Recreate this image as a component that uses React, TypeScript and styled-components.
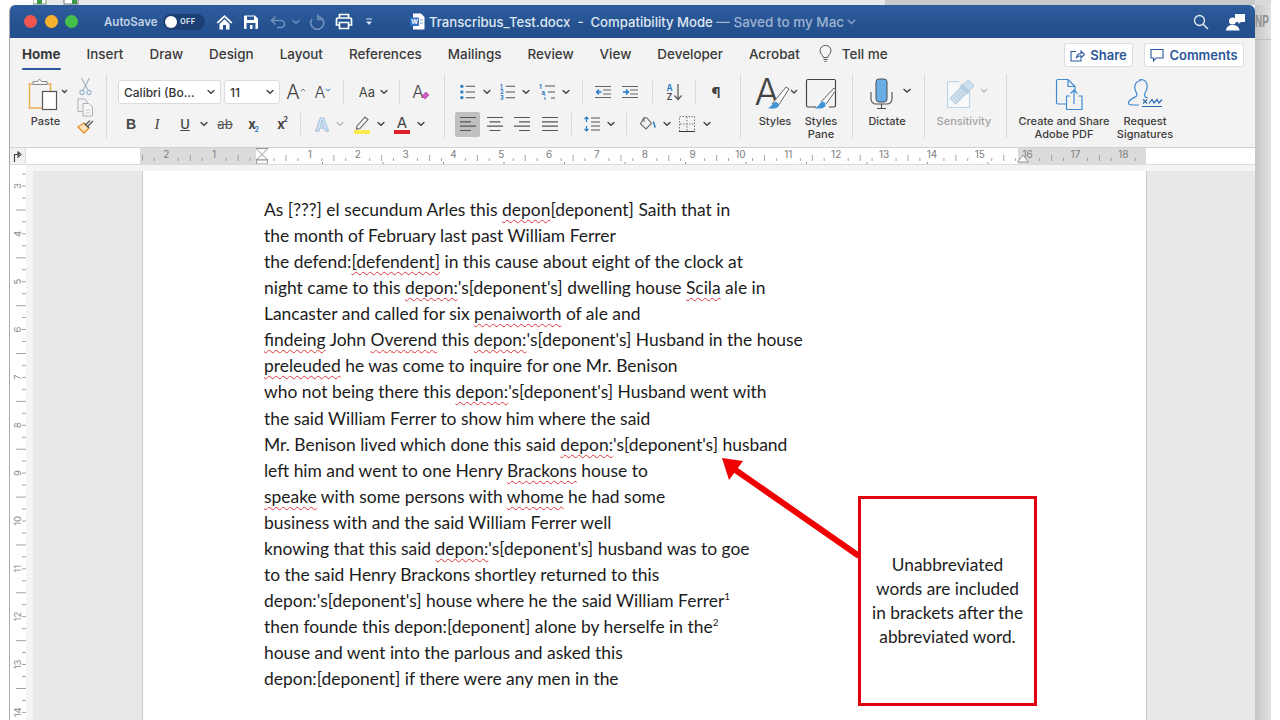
import React from "react";
import styled, { createGlobalStyle } from "styled-components";

const Global = createGlobalStyle`
  html, body { margin: 0; padding: 0; background: #fff; }
  body { font-family: Inter, "Liberation Sans", sans-serif; }
`;

const Screen = styled.div`
  position: relative; width: 1280px; height: 720px; overflow: hidden; background: #fff;
  display: flex; flex-direction: column;
`;
const BackStrip = styled.div`display: flex; height: 5px; flex: none;`;
const BackCell = styled.div<{ $w: number; $bg: string }>`
  width: ${p => p.$w}px; background: ${p => p.$bg}; flex: none; display: flex; gap: 16px; align-items: flex-end;
`;
const Main = styled.div`display: flex; flex: 1; min-height: 0; padding-left: 9px;`;
const Win = styled.div`
  width: 1245px; flex: none; display: flex; flex-direction: column; border-left: 1px solid #a9a9a9;
  border-radius: 6px 6px 0 0; overflow: hidden; background: #f4f3f3;
`;
const SideStrip = styled.div`
  width: 16px; flex: none; background: linear-gradient(90deg, #c6c6c6, #e2e2e2);
  font: 700 16px "Liberation Sans", sans-serif; color: #8f8f8f;
`;
const SideHead = styled.div`
  height: 34px; border-bottom: 1px solid #bdbdbd; display: flex; align-items: center;
`;
const SideText = styled.span`display: block; transform: scaleX(.62); transform-origin: left; white-space: nowrap;`;

/* ---- title bar ---- */
const TitleBar = styled.div`
  height: 33px; flex: none; display: flex; align-items: center; padding-left: 14px; padding-right: 10px;
  background: linear-gradient(180deg, #2f5c9f, #25528f 60%, #234f90);
  color: #fff;
`;
const Light = styled.span<{ $c: string; $l?: number }>`
  width: 13px; height: 13px; border-radius: 50%; background: ${p => p.$c}; flex: none; margin-left: ${p => p.$l ?? 0}px;
`;
const AutoSave = styled.span`
  margin-left: 26px; width: 53px; flex: none; white-space: nowrap; font-size: 11.5px; font-weight: 600; color: #c3d2e6;
`;
const Toggle = styled.span`
  margin-left: 6px; width: 42px; height: 16px; border-radius: 8px; flex: none; background: #1c3f74;
  display: flex; align-items: center; padding-left: 2px; box-sizing: border-box;
`;
const Knob = styled.span`width: 12px; height: 12px; border-radius: 50%; background: #fff; flex: none;`;
const ToggleText = styled.span`margin-left: 3px; font-size: 7.5px; font-weight: 700; color: #d5deeb; letter-spacing: .3px;`;
const Tool = styled.span<{ $l?: number; $w?: number }>`
  margin-left: ${p => p.$l ?? 0}px; width: ${p => p.$w ?? 16}px; flex: none;
  display: flex; align-items: center; justify-content: center; position: relative;
`;
const DocTitle = styled.span`
  margin-left: 4px; flex: none; white-space: nowrap; font-size: 13.15px; font-weight: 500; color: #dfe7f2;
`;
const Dim = styled.span`color: #9db3d2; font-size: 13.5px;`;
const TitleRight = styled.span`margin-left: auto; display: flex; align-items: center;`;

/* ---- tabs ---- */
const TabRow = styled.div`
  height: 34px; flex: none; display: flex; align-items: center; padding: 0 11px 0 12px; gap: 26px;
  font-size: 13.45px; color: #3a3a3a; white-space: nowrap;
`;
const Tab = styled.span<{ $active?: boolean }>`
  position: relative; font-weight: ${p => (p.$active ? 700 : 500)}; flex: none; margin-bottom: 2px;
  ${p => p.$active && `&::after { content: ""; position: absolute; left: 0; right: 0; bottom: -8px; height: 2.5px; background: #2b579a; border-radius: 1px; }`}
`;
const TellMe = styled.span`margin-left: -7px; margin-bottom: 2px; display: flex; align-items: center; gap: 10px; font-weight: 500;`;
const RightBtns = styled.span`margin-left: auto; display: flex; gap: 11px;`;
const OutlineBtn = styled.span<{ $w: number }>`
  width: ${p => p.$w}px; height: 24px; box-sizing: border-box; background: #fff; border: 1px solid #dedddd; border-radius: 3px;
  display: flex; align-items: center; justify-content: center; gap: 5px; color: #2b579a; font-size: 13px; font-weight: 600;
`;

/* ---- ribbon ---- */
const Ribbon = styled.div`
  height: 76px; flex: none; display: flex; align-items: flex-start; border-bottom: 1px solid #d2d1d1; box-sizing: border-box; color: #3a3a3a;
`;
const GroupDiv = styled.span<{ $l?: number }>`
  width: 1px; height: 64px; margin-top: 2px; margin-left: ${p => p.$l ?? 0}px; background: #d9d8d8; flex: none;
`;
const PasteGroup = styled.div`width: 96px; flex: none; display: flex;`;
const SmallCol = styled.div`display: flex; flex-direction: column; margin-left: 8px; padding-top: 5px; gap: 2px; flex: none;`;
const Group = styled.div<{ $w: number }>`
  width: ${p => p.$w}px; flex: none; display: flex; flex-direction: column; gap: 8px; padding-top: 8px; box-sizing: border-box;
`;
const ToolRow = styled.div<{ $pl?: number }>`display: flex; align-items: center; height: 24px; padding-left: ${p => p.$pl ?? 0}px;`;
const SelectBox = styled.span<{ $l?: number; $w: number }>`
  margin-left: ${p => p.$l ?? 0}px; width: ${p => p.$w}px; height: 24px; flex: none; box-sizing: border-box;
  background: #fff; border: 1px solid #dcdbdb; border-radius: 3px; display: flex; align-items: center; justify-content: space-between;
  padding: 0 5px 0 5px; font-size: 12px; font-weight: 500; color: #333; white-space: nowrap;
`;
const MiniDiv = styled.span<{ $l: number }>`width: 1px; height: 22px; background: #dbdada; margin-left: ${p => p.$l}px; flex: none;`;
const Glyph = styled.span<{ $s?: number; $c?: string; $w?: number; $f?: string }>`
  font-size: ${p => p.$s ?? 13}px; color: ${p => p.$c ?? "#444"}; font-weight: ${p => p.$w ?? 500}; line-height: 1;
  font-family: ${p => p.$f ?? "inherit"};
`;
const Strike = styled.span`font-size: 13px; color: #555; text-decoration: line-through; line-height: 1;`;
const Script = styled.span<{ $up?: boolean }>`
  font-size: 7px; font-weight: 700; position: absolute; line-height: 1; right: 1px;
  color: ${p => (p.$up ? "#444" : "#2d7fc8")};
  ${p => (p.$up ? "top: -2px;" : "bottom: -2px;")}
`;
const ActiveBox = styled.span`
  width: 25px; height: 25px; background: #c1c0c0; border-radius: 2px; margin-left: 10px; flex: none;
  display: flex; align-items: center; justify-content: center;
`;
const LargeTool = styled.div<{ $l?: number; $w: number }>`
  margin-left: ${p => p.$l ?? 0}px; width: ${p => p.$w}px; flex: none; display: flex; flex-direction: column; align-items: center;
  padding-top: 6px;
`;
const IconArea = styled.div`height: 37px; display: flex; align-items: flex-start; justify-content: center;`;
const Label = styled.div<{ $dim?: boolean }>`
  font-size: 11px; line-height: 13px; font-weight: 500; text-align: center; white-space: nowrap;
  color: ${p => (p.$dim ? "#a3a3a3" : "#3d3d3d")};
`;
const GlyphSvg = styled.svg`overflow: visible; flex: none;`;
const EraserMark = styled.svg`margin-left: -3px; margin-top: 6px; flex: none;`;

/* ---- ruler ---- */
const RulerRow = styled.div`
  height: 17px; flex: none; display: flex; background: #fff; border-bottom: 1px solid #dcdbdb; box-sizing: border-box;
`;
const RulerCorner = styled.div`
  width: 16px; flex: none; display: flex; align-items: center; justify-content: center; background: #f3f2f2; border-right: 1px solid #dcdbdb; box-sizing: border-box;
`;

/* ---- document ---- */
const DocArea = styled.div`flex: 1; min-height: 0; display: flex;`;
const VRuler = styled.div`width: 16px; flex: none; background: #fff; overflow: hidden;`;
const DocCol = styled.div`flex: 1; display: flex; flex-direction: column; background: #f5f4f4; min-width: 0;`;
const DocTop = styled.div`height: 6px; flex: none;`;
const DocRow = styled.div`flex: 1; display: flex; padding-left: 7px; min-height: 0;`;
const Gutter = styled.div<{ $w?: number; $side: "l" | "r" }>`
  ${p => (p.$w ? `width:${p.$w}px;flex:none;` : "flex:1;")}
  background: #e9e8e8; box-sizing: border-box;
  ${p => (p.$side === "l" ? "border-right: 1px solid #c9c8c8;" : "border-left: 1px solid #c9c8c8;")}
`;
const Page = styled.div`
  width: 1003px; flex: none; background: #fff; box-sizing: border-box; padding: 26px 0 0 121px;
  font-family: Lato, "Open Sans", sans-serif; font-size: 17.45px; line-height: 26.06px; color: #1c1c1c; white-space: nowrap; overflow: hidden;
`;
const Line = styled.div``;
const Err = styled.span`
  text-decoration: underline wavy #e0353a; text-decoration-thickness: 1px; text-underline-offset: 2.5px;
`;
const Sup = styled.sup`font-size: 10px; line-height: 0;`;

/* ---- overlays ---- */
const Callout = styled.div`
  position: absolute; left: 858px; top: 496px; width: 179px; height: 210px; box-sizing: border-box;
  border: 3px solid #e0000f; background: #fff; display: flex; align-items: center; justify-content: center;
  text-align: center; font: 400 17.3px/24px Lato, "Open Sans", sans-serif; color: #1c1c1c;
`;
const ArrowSvg = styled.svg`position: absolute; left: 700px; top: 440px;`;

/* ---- icons ---- */
const Chev = ({ c = "#444", w = 9 }: { c?: string; w?: number }) => (
  <svg width={w} height="6" viewBox="0 0 9 6"><path d="M1.2 1.2 4.5 4.5 7.8 1.2" fill="none" stroke={c} strokeWidth="1.6" strokeLinecap="round" /></svg>
);
const Lines = ({ rows, w = 16 }: { rows: [number, number][]; w?: number }) => (
  <svg width={w} height="16" viewBox={`0 0 ${w} 16`}>
    {rows.map(([a, b], i) => <path key={i} d={`M${a} ${1.5 + (i * 13) / (rows.length - 1)}H${b}`} stroke="#555" strokeWidth="1.2" />)}
  </svg>
);
const ListIcon = ({ kind }: { kind: "b" | "n" | "m" }) => (
  <svg width="17" height="16" viewBox="0 0 17 16">
    {[2, 8, 14].map((y, i) => <path key={y} d={`M${kind === "m" ? 6 + i * 3 : 6} ${y}H16`} stroke="#555" strokeWidth="1.1" />)}
    {[2, 8, 14].map((y, i) => kind === "b"
      ? <rect key={i} x="0.5" y={y - 1.5} width="3" height="3" fill="#2478c4" />
      : <text key={i} x={kind === "m" ? i * 2.5 : 0} y={y + 2.5} fontSize="6" fontWeight="700" fill="#2478c4" fontFamily="Inter">{kind === "m" ? ["1", "a", "i"][i] : i + 1}</text>)}
  </svg>
);
const IndentIcon = ({ flip }: { flip?: boolean }) => (
  <svg width="16" height="14" viewBox="0 0 16 14">
    <path d="M0 1.5H16M8 5H16M8 9H16M0 12.5H16" stroke="#666" strokeWidth="1.1" />
    <path d={flip ? "M1 7H6M4 4.5 6.5 7 4 9.5" : "M6.5 7H1.5M4 4.5 1.5 7 4 9.5"} fill="none" stroke="#2478c4" strokeWidth="1.3" />
  </svg>
);

const Ruler = () => {
  const u = 47.85, z = 236;
  const nums: [string, number][] = [];
  for (let k = -2; k <= 18; k++) if (k !== 0) nums.push([String(Math.abs(k)), z + k * u]);
  const ticks: React.ReactNode[] = [];
  for (let k = -3; k <= 19; k++) {
    const x = z + k * u;
    ticks.push(<path key={`a${k}`} d={`M${x + 24} 7V13M${x + 12} 10V13M${x - 12} 10V13`} stroke="#8f8f8f" strokeWidth=".8" />);
  }
  const tabs: number[] = [];
  for (let i = 1; i <= 12; i++) tabs.push(z + i * 60.5);
  return (
    <svg width="1229" height="16" viewBox="0 0 1229 16">
      <rect x="114" y="0" width="116" height="16" fill="#dcdbdb" />
      <rect x="992" y="0" width="128" height="16" fill="#dcdbdb" />
      <clipPath id="rc"><rect x="114" y="0" width="1006" height="16" /></clipPath>
      <g clipPath="url(#rc)">{ticks}</g>
      {nums.map(([t, x]) => <text key={x} x={x} y="10" fontSize="10" fill="#7d7d7d" textAnchor="middle" fontFamily="Inter">{t}</text>)}
      {tabs.map(x => <path key={x} d={`M${x} 14V16`} stroke="#777" strokeWidth=".8" />)}
      <path d="M230 .5H242L236 6.5ZM236 6.5 230 12H242Z" fill="#fafafa" stroke="#8d8d8d" strokeWidth=".9" />
      <rect x="230.5" y="12" width="11" height="4" rx="1" fill="#fafafa" stroke="#8d8d8d" strokeWidth=".9" />
      <path d="M997 7 991.500 14H1002.500Z" fill="#fafafa" stroke="#8d8d8d" strokeWidth=".9" />
    </svg>
  );
};
const VerticalRuler = () => {
  const u = 47.85;
  const items: React.ReactNode[] = [];
  for (let n = 3; n <= 14; n++) {
    const y = 21 + (n - 3) * u;
    items.push(
      <g key={n}>
        <text transform={`translate(10.500 ${y}) rotate(-90)`} fontSize="9.500" fill="#8a8a8a" textAnchor="middle" fontFamily="Inter">{n}</text>
        <path d={`M12 ${y}H16M12 ${y + 12}H16M12 ${y - 12}H16M6 ${y + 24}H16`} stroke="#9a9a9a" strokeWidth=".9" />
      </g>
    );
  }
  return <svg width="16" height="555" viewBox="0 0 16 555">{items}</svg>;
};

const doc: React.ReactNode[] = [
  <>As [???] el secundum Arles this <Err>depon</Err>[deponent] Saith that in</>,
  <>the month of February last past William Ferrer</>,
  <>the defend:<Err>[defendent]</Err> in this cause about eight of the clock at</>,
  <>night came to this <Err>depon:</Err>'s[deponent's] dwelling house <Err>Scila</Err> ale in</>,
  <>Lancaster and called for six <Err>penaiworth</Err> of ale and</>,
  <><Err>findeing</Err> John <Err>Overend</Err> this <Err>depon:</Err>'s[deponent's] Husband in the house</>,
  <><Err>preleuded</Err> he was come to inquire for one Mr. Benison</>,
  <>who not being there this <Err>depon:</Err>'s[deponent's] Husband went with</>,
  <>the said William Ferrer to show him where the said</>,
  <>Mr. Benison lived which done this said <Err>depon:</Err>'s[deponent's] husband</>,
  <>left him and went to one Henry <Err>Brackons</Err> house to</>,
  <><Err>speake</Err> with some persons with <Err>whome</Err> he had some</>,
  <>business with and the said William Ferrer well</>,
  <>knowing that this said <Err>depon:</Err>'s[deponent's] husband was to goe</>,
  <>to the said Henry Brackons shortley returned to this</>,
  <>depon:'s[deponent's] house where he the said William Ferrer<Sup>1</Sup></>,
  <>then founde this depon:[deponent] alone by herselfe in the<Sup>2</Sup></>,
  <>house and went into the parlous and asked this</>,
  <>depon:[deponent] if there were any men in the</>,
];

const tabs = ["Insert", "Draw", "Design", "Layout", "References", "Mailings", "Review", "View", "Developer", "Acrobat"];

export default function App() {
  return (
    <Screen>
      <Global />
      <BackStrip>
        <BackCell $w={33} $bg="#fff" />
        <BackCell $w={852} $bg="#e9e9e9">
          <svg width="46" height="5" viewBox="0 0 46 5"><rect x="0" y="-5" width="13" height="9" fill="#fff" stroke="#7a9a7a" /><rect x="4" y="0" width="5" height="4" fill="#3d9a4a" /><rect x="31" y="-5" width="14" height="9" fill="#fff" stroke="#777" /><rect x="39" y="0" width="5" height="4" fill="#3d9a4a" /></svg>
        </BackCell>
        <BackCell $w={370} $bg="#c9c9c9" />
        <BackCell $w={16} $bg="#d9d9d9" />
      </BackStrip>
      <Main>
        <Win>
          <TitleBar>
            <Light $c="#f0564f" /><Light $c="#f6b22f" $l={7.5} /><Light $c="#44c04a" $l={7.5} />
            <AutoSave>AutoSave</AutoSave>
            <Toggle><Knob /><ToggleText>OFF</ToggleText></Toggle>
            <Tool $l={11} $w={17}><svg width="17" height="16" viewBox="0 0 17 16"><path d="M.5 8.500 8.500 1 16.500 8.500 15 9.500 8.500 3.500 2 9.500ZM3.500 10 8.500 5.300 13.500 10V15.500H10V11H7V15.500H3.500Z" fill="#fff" /></svg></Tool>
            <Tool $l={10} $w={16}><svg width="16" height="16" viewBox="0 0 16 16"><path d="M1 2.500A1 1 0 0 1 2 1.500H12L15 4.500V14a1 1 0 0 1-1 1H2a1 1 0 0 1-1-1Z" fill="#fff" /><rect x="4" y="2.500" width="7" height="3.500" fill="#2a5797" /><rect x="3.500" y="9" width="9" height="6" fill="#2a5797" /><rect x="7" y="11" width="2.500" height="4" fill="#fff" /></svg></Tool>
            <Tool $l={11} $w={16}><svg width="16" height="14" viewBox="0 0 16 14"><path d="M5.500 1.500 1.500 5.500 5.500 9.500M1.500 5.500H11a3.500 3.500 0 0 1 0 7H7" fill="none" stroke="#6f8fbd" strokeWidth="1.6" /></svg></Tool>
            <Tool $l={6} $w={8}><Chev c="#6f8fbd" w={8} /></Tool>
            <Tool $l={8} $w={17}><svg width="17" height="17" viewBox="0 0 17 17"><path d="M6 3.500A6.500 6.500 0 1 0 12.500 6M6.500 1.500V6.500H1.500" fill="none" stroke="#6f8fbd" strokeWidth="1.7" transform="translate(16.500 0) scale(-1 1)" /></svg></Tool>
            <Tool $l={10} $w={18}><svg width="18" height="17" viewBox="0 0 18 17"><path d="M4.500 5V1.500H13.500V5M4.500 12H1.500V6.500a1.500 1.500 0 0 1 1.500-1.500H15a1.500 1.500 0 0 1 1.500 1.500V12H13.500M4.500 9.500H13.500V15.500H4.500Z" fill="none" stroke="#fff" strokeWidth="1.700" /></svg></Tool>
            <Tool $l={12} $w={8}><svg width="8" height="8" viewBox="0 0 8 8"><path d="M1 1H7" stroke="#d8e1ee" strokeWidth="1.200" /><path d="M1 3.500H7L4 7Z" fill="#d8e1ee" /></svg></Tool>
            <Tool $l={37} $w={15}><svg width="15" height="17" viewBox="0 0 15 17"><path d="M3 .5H11L14.500 4V16.500H3Z" fill="#fff" /><rect x="0" y="4.500" width="9" height="8.500" rx="1" fill="#2f6fc4" /><text x="4.500" y="11" fontSize="6.500" fontWeight="700" fill="#fff" textAnchor="middle" fontFamily="Inter">W</text><path d="M10 7H13M10 10H13" stroke="#7ba3d8" /></svg></Tool>
            <DocTitle>Transcribus_Test.docx&nbsp; - &nbsp;Compatibility Mode <Dim>— Saved to my Mac</Dim></DocTitle>
            <Tool $l={3} $w={9}><Chev c="#7f9ac3" w={9} /></Tool>
            <TitleRight>
              <Tool $w={16}><svg width="16" height="16" viewBox="0 0 16 16"><circle cx="6.500" cy="6.500" r="5" fill="none" stroke="#e4ebf4" strokeWidth="1.300" /><path d="M10.200 10.200 15 15" stroke="#e4ebf4" strokeWidth="1.500" /></svg></Tool>
              <Tool $l={17} $w={19}><svg width="19" height="18" viewBox="0 0 19 18"><path d="M9 1H19V9H15L12.500 11V9H9Z" fill="#fff" /><circle cx="6.500" cy="8" r="3.500" fill="#fff" /><path d="M0 17.500C.5 13.500 3 12 6.500 12S13 13.500 13.500 17.500Z" fill="#fff" /></svg></Tool>
            </TitleRight>
          </TitleBar>

          <TabRow>
            <Tab $active>Home</Tab>
            {tabs.map(t => <Tab key={t}>{t}</Tab>)}
            <TellMe>
              <svg width="13" height="18" viewBox="0 0 13 18"><path d="M4.300 12.500C4 10 1 9 1 5.800A5.500 5.500 0 0 1 12 5.800C12 9 9 10 8.700 12.500ZM4.500 14.500H8.500M5.500 16.500H7.500" fill="none" stroke="#555" strokeWidth="1" /></svg>
              Tell me
            </TellMe>
            <RightBtns>
              <OutlineBtn $w={69}>
                <svg width="15" height="13" viewBox="0 0 15 13"><path d="M6 2.500H1V12H11V8M6.500 8.500C7 5.500 9 4.500 11 4.500V2L14.500 5.500 11 9V6.800C9 6.800 7.500 7.500 6.500 8.500Z" fill="none" stroke="#2b579a" strokeWidth="1.100" /></svg>
                Share
              </OutlineBtn>
              <OutlineBtn $w={100}>
                <svg width="14" height="14" viewBox="0 0 14 14"><path d="M1 1.500H13V10H6L3.500 13V10H1Z" fill="none" stroke="#2b579a" strokeWidth="1.100" /></svg>
                Comments
              </OutlineBtn>
            </RightBtns>
          </TabRow>

          <Ribbon>
            <PasteGroup>
              <LargeTool $l={12} $w={47}>
                <IconArea>
                  <svg width="47" height="33" viewBox="0 0 47 33">
                    <rect x="7.500" y="6" width="21" height="24" fill="none" stroke="#eaa94a" strokeWidth="1.400" />
                    <path d="M11 6.500V3.500H15.500L17.500 1 19.500 3.500H25V6.500Z" fill="#f4f3f3" stroke="#888" strokeWidth="1" />
                    <rect x="20.500" y="13.500" width="14" height="18" fill="#fff" stroke="#555" strokeWidth="1.200" />
                    <path d="M41 12 43.500 14.500 46 12" transform="translate(-1 0)" fill="none" stroke="#444" strokeWidth="1.400" />
                  </svg>
                </IconArea>
                <Label>Paste</Label>
              </LargeTool>
              <SmallCol>
                <Tool $w={17}><svg width="13" height="19" viewBox="0 0 13 19"><path d="M2.500 1 9 13M10.500 1 4 13" stroke="#9fb0c0" strokeWidth="1.100" /><circle cx="3" cy="15.500" r="2.200" fill="none" stroke="#79a6d0" /><circle cx="10" cy="15.500" r="2.200" fill="none" stroke="#79a6d0" /></svg></Tool>
                <Tool $w={17}><svg width="17" height="19" viewBox="0 0 17 19"><path d="M7 13.500H1V1H8L10 3V5" fill="none" stroke="#aab2ba" /><path d="M6 5.500H12L15.500 9V18H6Z" fill="#f7f7f7" stroke="#aab2ba" /><path d="M8.500 12H13M8.500 15H13" stroke="#c2c7cc" /></svg></Tool>
                <Tool $w={17}><svg width="17" height="17" viewBox="0 0 17 17"><path d="M1 8 7 14 12 9 7 4Z" fill="#fbe3bd" stroke="#ea8e2a" strokeWidth="1.300" /><path d="M7.500 4.500 12 9M11 7 16 2M9 5.500 13 1.500" stroke="#555" strokeWidth="1.100" /></svg></Tool>
              </SmallCol>
            </PasteGroup>
            <GroupDiv />

            <Group $w={337}>
              <ToolRow $pl={11}>
                <SelectBox $w={103}>Calibri (Bo...<Chev w={8} /></SelectBox>
                <SelectBox $l={3} $w={56}>11<Chev w={8} /></SelectBox>
                <Tool $l={5} $w={22}><Glyph $s={20} $w={300}>A</Glyph><svg width="6" height="8" viewBox="0 0 6 8"><path d="M.8 3.200 3 1 5.200 3.200" fill="none" stroke="#777" /></svg></Tool>
                <Tool $l={7} $w={18}><Glyph $s={16} $w={300}>A</Glyph><svg width="6" height="8" viewBox="0 0 6 8"><path d="M.8 .8 3 3 5.200 .8" fill="none" stroke="#2478c4" /></svg></Tool>
                <MiniDiv $l={11} />
                <Tool $l={13} $w={20}><Glyph $s={13} $w={400}>Aa</Glyph></Tool>
                <Tool $l={2} $w={10}><Chev w={8} /></Tool>
                <MiniDiv $l={10} />
                <Tool $l={12} $w={18}><Glyph $s={17} $w={300}>A</Glyph><EraserMark width="9" height="9" viewBox="0 0 9 9"><path d="M1 5 5 1 8 4 4 8Z" fill="#d35ec7" stroke="#a33a9b" strokeWidth=".7" /></EraserMark></Tool>
              </ToolRow>
              <ToolRow>
                <Tool $l={16} $w={16}><Glyph $s={14} $w={700} $f={'"Liberation Sans", sans-serif'}>B</Glyph></Tool>
                <Tool $l={10} $w={16}><Glyph $s={15} $w={400} $f={'"Liberation Serif", serif'}><i>I</i></Glyph></Tool>
                <Tool $l={12} $w={16}><Glyph $s={13} $w={500}><u>U</u></Glyph></Tool>
                <Tool $l={6} $w={10}><Chev w={8} /></Tool>
                <Tool $l={6} $w={20}><Strike>ab</Strike></Tool>
                <Tool $l={9} $w={16}><Glyph $s={13} $w={700}>x</Glyph><Script>2</Script></Tool>
                <Tool $l={13} $w={16}><Glyph $s={13} $w={700}>x</Glyph><Script $up>2</Script></Tool>
                <MiniDiv $l={11} />
                <Tool $l={11} $w={20}><GlyphSvg width="20" height="18" viewBox="0 0 20 18"><text x="10" y="15.500" fontSize="18" fontWeight="700" fill="#dbe8f5" stroke="#9cc0e0" strokeWidth=".9" textAnchor="middle" fontFamily="Inter">A</text></GlyphSvg></Tool>
                <Tool $l={3} $w={10}><Chev c="#bbb" w={8} /></Tool>
                <Tool $l={7} $w={20}><svg width="18" height="19" viewBox="0 0 18 19"><path d="M4 11 12 2 15 4.500 7 13.500 3.500 14Z" fill="none" stroke="#666" strokeWidth="1.100" /><rect x="1" y="15" width="16" height="4" fill="#fce94a" /></svg></Tool>
                <Tool $l={4} $w={10}><Chev w={8} /></Tool>
                <Tool $l={6} $w={20}><GlyphSvg width="18" height="19" viewBox="0 0 18 19"><text x="9" y="13" fontSize="15" fontWeight="400" fill="#444" textAnchor="middle" fontFamily="Inter">A</text><rect x="1" y="15" width="16" height="4" fill="#de1f26" /></GlyphSvg></Tool>
                <Tool $l={4} $w={10}><Chev w={8} /></Tool>
              </ToolRow>
            </Group>
            <GroupDiv />

            <Group $w={295}>
              <ToolRow>
                <Tool $l={15} $w={16}><ListIcon kind="b" /></Tool>
                <Tool $l={6} $w={10}><Chev w={8} /></Tool>
                <Tool $l={8} $w={16}><ListIcon kind="n" /></Tool>
                <Tool $l={5} $w={10}><Chev w={8} /></Tool>
                <Tool $l={8} $w={17}><ListIcon kind="m" /></Tool>
                <Tool $l={5} $w={10}><Chev w={8} /></Tool>
                <MiniDiv $l={11} />
                <Tool $l={12} $w={16}><IndentIcon /></Tool>
                <Tool $l={11} $w={16}><IndentIcon flip /></Tool>
                <MiniDiv $l={14} />
                <Tool $l={12} $w={17}>
                  <GlyphSvg width="17" height="18" viewBox="0 0 17 18"><text x="4.500" y="8" fontSize="8.500" fontWeight="600" fill="#2478c4" textAnchor="middle" fontFamily="Inter">A</text><text x="4.500" y="17" fontSize="8.500" fontWeight="600" fill="#444" textAnchor="middle" fontFamily="Inter">Z</text><path d="M13 1V16M9.500 12.500 13 16.500 16.500 12.500" fill="none" stroke="#555" strokeWidth="1.200" /></GlyphSvg>
                </Tool>
                <MiniDiv $l={13} />
                <Tool $l={12} $w={16}><Glyph $s={15} $w={700}>¶</Glyph></Tool>
              </ToolRow>
              <ToolRow>
                <ActiveBox><Lines rows={[[0, 16], [0, 11], [0, 16], [0, 11]]} /></ActiveBox>
                <Tool $l={7}><Lines rows={[[0, 16], [2.500, 13.500], [0, 16], [2.500, 13.500]]} /></Tool>
                <Tool $l={11}><Lines rows={[[0, 16], [5, 16], [0, 16], [5, 16]]} /></Tool>
                <Tool $l={12}><Lines rows={[[0, 16], [0, 16], [0, 16], [0, 16]]} /></Tool>
                <MiniDiv $l={13} />
                <Tool $l={12} $w={16}><svg width="16" height="16" viewBox="0 0 16 16"><path d="M7 2H16M7 6H16M7 10H16M7 14H16" stroke="#555" strokeWidth="1.100" /><path d="M2.500 1V6M.5 3 2.500 1 4.500 3M2.500 10V15M.5 13 2.500 15 4.500 13" fill="none" stroke="#2478c4" strokeWidth="1.200" /></svg></Tool>
                <Tool $l={6} $w={10}><Chev w={8} /></Tool>
                <MiniDiv $l={10} />
                <Tool $l={12} $w={18}><svg width="18" height="16" viewBox="0 0 18 16"><path d="M5 1.500 1.500 8 7 13 12.500 7.500 8 2 5 1.500M5 1.500V6" fill="none" stroke="#666" strokeWidth="1.100" /><path d="M14.500 6 16 11" stroke="#2478c4" strokeWidth="1.500" strokeLinecap="round" /></svg></Tool>
                <Tool $l={5} $w={10}><Chev w={8} /></Tool>
                <Tool $l={7} $w={16}><svg width="16" height="16" viewBox="0 0 16 16"><rect x=".5" y=".5" width="15" height="15" fill="none" stroke="#777" strokeDasharray="1.500 1.500" /><path d="M8 1V15M1 8H15" stroke="#777" strokeDasharray="1.500 1.500" /><path d="M0 15.500H16" stroke="#333" strokeWidth="1.200" /></svg></Tool>
                <Tool $l={7} $w={10}><Chev w={8} /></Tool>
              </ToolRow>
            </Group>
            <GroupDiv />

            <LargeTool $l={9} $w={50}>
              <IconArea>
                <GlyphSvg width="50" height="32" viewBox="0 0 50 32">
                  <text x="17" y="27" fontSize="37" fontWeight="300" fill="#444" textAnchor="middle" fontFamily="Inter">A</text>
                  <path d="M22 26 36 9 39 11 28 28" fill="#fafafa" stroke="#666" strokeWidth="1" />
                  <path d="M17 30C22 30 22 24 26 24 29 25 29 27 28 29 26 31 20 31 17 30Z" fill="#3f95d6" />
                  <path d="M41 12 44 15 47 12" fill="none" stroke="#444" strokeWidth="1.400" />
                </GlyphSvg>
              </IconArea>
              <Label>Styles</Label>
            </LargeTool>
            <LargeTool $l={1} $w={40}>
              <IconArea>
                <svg width="32" height="32" viewBox="0 0 32 32">
                  <path d="M11 29H3A1.500 1.500 0 0 1 1.500 27.500V3A1.500 1.500 0 0 1 3 1.500H29A1.500 1.500 0 0 1 30.500 3V27.500A1.500 1.500 0 0 1 29 29H24" fill="none" stroke="#444" strokeWidth="1.200" />
                  <path d="M16 24 29 10 31 12 21 26" fill="#fafafa" stroke="#666" strokeWidth="1" />
                  <path d="M9 30C14 30 14 24 18 23.500 21 24.500 21 27 20 28.500 18 31 13 31 9 30Z" fill="#3f95d6" />
                </svg>
              </IconArea>
              <Label>Styles<br />Pane</Label>
            </LargeTool>
            <GroupDiv $l={11} />

            <LargeTool $l={9} $w={50}>
              <IconArea>
                <svg width="50" height="32" viewBox="0 0 50 32">
                  <rect x="14" y="1" width="11" height="23" rx="3" fill="#69ade6" stroke="#4f4f4f" strokeWidth="1" />
                  <path d="M9 14V21A5 5 0 0 0 14 26H25A5 5 0 0 0 30 21V14M19.500 26V30M15 30.500H24" fill="none" stroke="#4f4f4f" strokeWidth="1.100" />
                  <path d="M41.500 11 45 14 48.500 11" fill="none" stroke="#444" strokeWidth="1.500" />
                </svg>
              </IconArea>
              <Label>Dictate</Label>
            </LargeTool>
            <GroupDiv $l={12} />

            <LargeTool $l={9} $w={60}>
              <IconArea>
                <svg width="60" height="32" viewBox="0 0 60 32">
                  <path d="M13.500 3.500H25M35.500 14V29.500H13.500V3.500" fill="#f7f9fb" stroke="#b8d4ea" strokeWidth="1.100" />
                  <g transform="rotate(-45 28 14)">
                    <rect x="15" y="10" width="15" height="8" fill="#cfe0ee" stroke="#b7cfe2" />
                    <path d="M18 10V18M21 10V18M24 10V18M27 10V18" stroke="#b7cfe2" strokeWidth="1" />
                    <rect x="30" y="8.500" width="4" height="11" fill="#b7cfe2" />
                    <rect x="34" y="10" width="7" height="8" fill="#cfe0ee" stroke="#b7cfe2" />
                  </g>
                  <path d="M47 11 50 14 53 11" fill="none" stroke="#bbb" strokeWidth="1.400" />
                </svg>
              </IconArea>
              <Label $dim>Sensitivity</Label>
            </LargeTool>
            <GroupDiv $l={12} />

            <LargeTool $l={7} $w={100}>
              <IconArea>
                <svg width="38" height="33" viewBox="-10 0 38 33">
                  <path d="M11 26H3A1.500 1.500 0 0 1 1.500 24.500V3A1.500 1.500 0 0 1 3 1.500H13L20 8.500V14M13 1.500V8.500H20" fill="none" stroke="#3e8ad3" strokeWidth="1.200" />
                  <path d="M15 18H11.500V31.500H27V18H23.500M19 26V12M15.500 15.500 19 12 22.500 15.500" fill="none" stroke="#3e8ad3" strokeWidth="1.200" />
                </svg>
              </IconArea>
              <Label>Create and Share<br />Adobe PDF</Label>
            </LargeTool>
            <LargeTool $w={62}>
              <IconArea>
                <svg width="36" height="30" viewBox="0 0 36 30">
                  <path d="M12 2C17 .5 21 4 20 10 19.500 13.500 17.500 15 17.500 17 17.500 19 19 19.500 21 20M14 2.500C9 3 7 7 8 11 8.500 14 10 15 10 17 10 20 2 20 1.500 25 1 27 4 27 12 27" fill="none" stroke="#3e8ad3" strokeWidth="1.200" />
                  <path d="M16 21.500 20 25.500M20 21.500 16 25.500M22 25.500 25 21.500 27 25 30 21.500 32 25 35 21.500M15 28.500H35" fill="none" stroke="#2868b3" strokeWidth="1.200" />
                </svg>
              </IconArea>
              <Label>Request<br />Signatures</Label>
            </LargeTool>
          </Ribbon>

          <RulerRow>
            <RulerCorner>
              <svg width="9" height="11" viewBox="0 0 9 11"><path d="M1.500 11V3.500H6M5 1 8 3.500 5 6Z" fill="none" stroke="#444" strokeWidth="1.100" /></svg>
            </RulerCorner>
            <Ruler />
          </RulerRow>

          <DocArea>
            <VRuler><VerticalRuler /></VRuler>
            <DocCol>
              <DocTop />
              <DocRow>
                <Gutter $w={110} $side="l" />
                <Page>{doc.map((l, i) => <Line key={i}>{l}</Line>)}</Page>
                <Gutter $side="r" />
              </DocRow>
            </DocCol>
          </DocArea>
        </Win>
        <SideStrip><SideHead><SideText>NP</SideText></SideHead></SideStrip>
      </Main>

      <ArrowSvg width="170" height="130" viewBox="0 0 170 130">
        <path d="M159 116 34 29" stroke="#f00000" strokeWidth="6" />
        <path d="M22 18 43 21 29 40Z" fill="#f00000" />
      </ArrowSvg>
      <Callout><div>Unabbreviated<br />words are included<br />in brackets after the<br />abbreviated word.</div></Callout>
    </Screen>
  );
}
